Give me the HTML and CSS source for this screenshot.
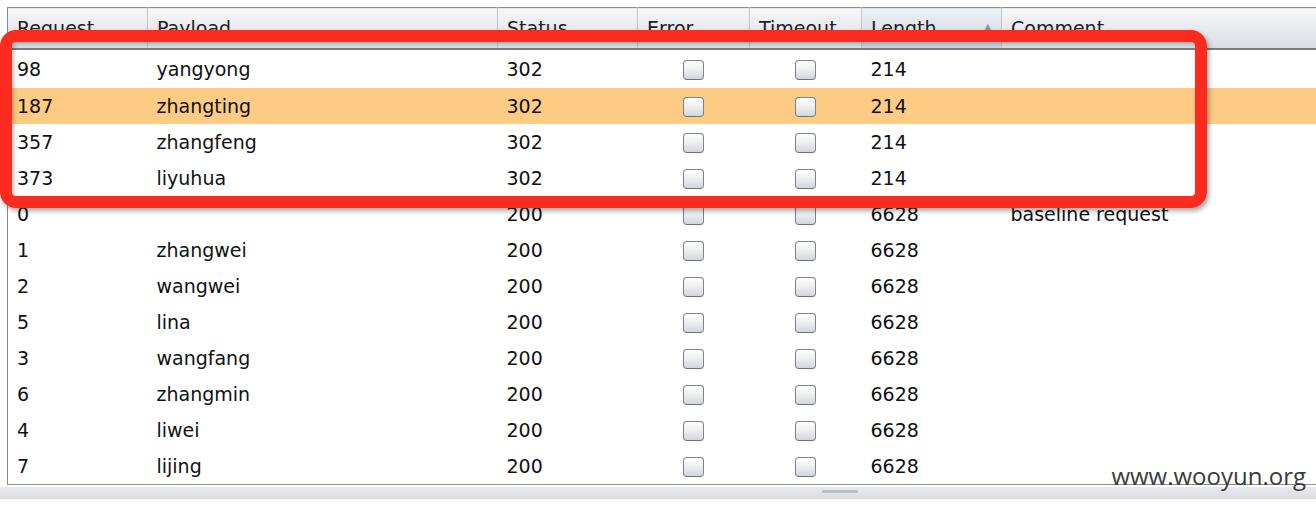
FILE: index.html
```html
<!DOCTYPE html>
<html lang="en">
<head>
    <meta charset="UTF-8">
    <title>Intruder results</title>
    <link rel="stylesheet" href="styles.css">
</head>
<body>
    <div class="results">
        <table class="grid">
            <colgroup>
                <col class="c-req"><col class="c-pay"><col class="c-status"><col class="c-err"><col class="c-time"><col class="c-len"><col>
            </colgroup>
            <thead>
                <tr>
                    <th>Request</th>
                    <th>Payload</th>
                    <th>Status</th>
                    <th>Error</th>
                    <th>Timeout</th>
                    <th class="sorted">Length<span class="arrow">&#9650;</span></th>
                    <th>Comment</th>
                </tr>
            </thead>
            <tbody>
                <tr><td>98</td><td>yangyong</td><td>302</td><td class="chk"><span class="box"></span></td><td class="chk"><span class="box"></span></td><td>214</td><td></td></tr>
                <tr class="selected"><td>187</td><td>zhangting</td><td>302</td><td class="chk"><span class="box"></span></td><td class="chk"><span class="box"></span></td><td>214</td><td></td></tr>
                <tr><td>357</td><td>zhangfeng</td><td>302</td><td class="chk"><span class="box"></span></td><td class="chk"><span class="box"></span></td><td>214</td><td></td></tr>
                <tr><td>373</td><td>liyuhua</td><td>302</td><td class="chk"><span class="box"></span></td><td class="chk"><span class="box"></span></td><td>214</td><td></td></tr>
                <tr><td>0</td><td></td><td>200</td><td class="chk"><span class="box"></span></td><td class="chk"><span class="box"></span></td><td>6628</td><td>baseline request</td></tr>
                <tr><td>1</td><td>zhangwei</td><td>200</td><td class="chk"><span class="box"></span></td><td class="chk"><span class="box"></span></td><td>6628</td><td></td></tr>
                <tr><td>2</td><td>wangwei</td><td>200</td><td class="chk"><span class="box"></span></td><td class="chk"><span class="box"></span></td><td>6628</td><td></td></tr>
                <tr><td>5</td><td>lina</td><td>200</td><td class="chk"><span class="box"></span></td><td class="chk"><span class="box"></span></td><td>6628</td><td></td></tr>
                <tr><td>3</td><td>wangfang</td><td>200</td><td class="chk"><span class="box"></span></td><td class="chk"><span class="box"></span></td><td>6628</td><td></td></tr>
                <tr><td>6</td><td>zhangmin</td><td>200</td><td class="chk"><span class="box"></span></td><td class="chk"><span class="box"></span></td><td>6628</td><td></td></tr>
                <tr><td>4</td><td>liwei</td><td>200</td><td class="chk"><span class="box"></span></td><td class="chk"><span class="box"></span></td><td>6628</td><td></td></tr>
                <tr><td>7</td><td>lijing</td><td>200</td><td class="chk"><span class="box"></span></td><td class="chk"><span class="box"></span></td><td>6628</td><td></td></tr>
            </tbody>
        </table>
        <div class="hscroll"><span class="thumb"></span></div>
        <div class="highlight"></div>
        <div class="watermark">www.wooyun.org</div>
    </div>
</body>
</html>
```

FILE: styles.css
```css
body {
    margin: 0;
    background-color: #fff;
    font-family: "DejaVu Sans", Verdana, sans-serif;
    overflow: hidden;
}

.results {
    position: relative;
    width: 1316px;
    height: 506px;
    padding: 7px 0 0 7px;
    box-sizing: border-box;
}

.grid {
    border-collapse: collapse;
    table-layout: fixed;
    width: 1320px;
    border: 1px solid #8d8d8d;
    border-right: none;
    font-size: 19px;
    color: #111;
}

.c-req { width: 140px; }
.c-pay { width: 350px; }
.c-status { width: 140px; }
.c-err { width: 112px; }
.c-time { width: 112px; }
.c-len { width: 140px; }

th {
    height: 41px;
    padding: 0 0 0 9px;
    text-align: left;
    vertical-align: top;
    padding-top: 9px;
    box-sizing: border-box;
    font-weight: normal;
    color: #222;
    background: linear-gradient(#f7f7f9, #e6e7ec 60%, #dcdde3);
    border-left: 1px solid #c4c5cb;
    border-bottom: 2px solid #7b7c80;
    white-space: nowrap;
    overflow: hidden;
    position: relative;
}

th:first-child {
    border-left: none;
}

th.sorted {
    background: linear-gradient(#eef1f6, #d9e0ea 60%, #c9d3e0);
}

.arrow {
    position: absolute;
    right: 10px;
    top: 14px;
    font-size: 8px;
    color: #8a93a3;
}

td {
    height: 36px;
    padding: 0 0 0 9px;
    white-space: nowrap;
    overflow: hidden;
}

tbody tr:first-child td {
    height: 37px;
    padding-top: 1px;
}

tr.selected td {
    background-color: #fdcb83;
}

td.chk {
    padding: 0;
    text-align: center;
}

.box {
    display: inline-block;
    width: 19px;
    height: 18px;
    vertical-align: middle;
    border: 1px solid #7f838a;
    border-bottom-color: #6e7278;
    border-radius: 4px;
    background: linear-gradient(#fdfdfd, #f1f2f4 40%, #d3d6dd);
    box-shadow: inset 0 1px 0 #fff;
}

.hscroll {
    height: 12px;
    margin-top: 2px;
    margin-left: -7px;
    background: linear-gradient(#e9eaee, #dcdde2);
    position: relative;
}

.thumb {
    position: absolute;
    left: 822px;
    top: 3px;
    width: 36px;
    height: 3px;
    border-radius: 2px;
    background-color: #b9bcc4;
}

.highlight {
    position: absolute;
    left: 0;
    top: 30px;
    width: 1207px;
    height: 178px;
    box-sizing: border-box;
    border: 12px solid #fb2b1f;
    border-radius: 16px;
    box-shadow: 2px 3px 5px rgba(0, 0, 0, 0.35), inset 2px 2px 4px rgba(0, 0, 0, 0.25);
}

.watermark {
    position: absolute;
    right: 10px;
    top: 462px;
    font-family: "Open Sans", "DejaVu Sans", sans-serif;
    font-size: 24px;
    color: #3b3b3b;
    line-height: 28px;
}
```
